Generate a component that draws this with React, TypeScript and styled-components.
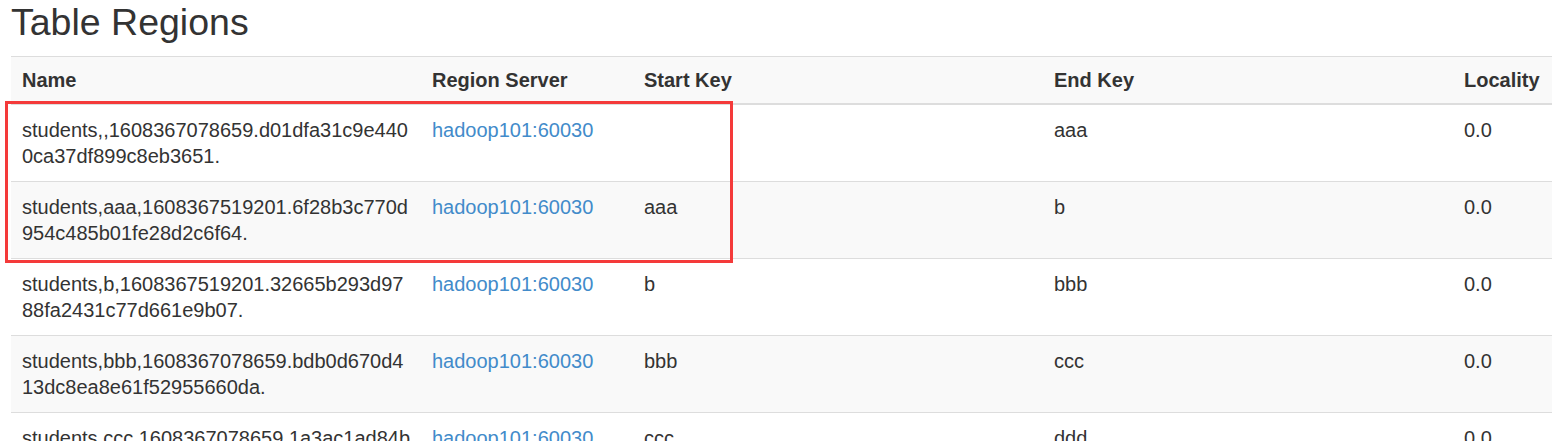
import React from "react";
import styled, { createGlobalStyle } from "styled-components";

const GlobalStyle = createGlobalStyle`
  html, body {
    margin: 0;
    padding: 0;
    background: #fff;
    overflow: hidden;
  }
  body {
    font-family: "Liberation Sans", Arial, Helvetica, sans-serif;
    color: #333;
  }
`;

const Page = styled.div`
  position: relative;
  padding: 2px 0 0 11px;
`;

const Title = styled.h2`
  margin: 0 0 14px;
  font-size: 37.5px;
  line-height: 40px;
  font-weight: 400;
  color: #333;
`;

const RegionTable = styled.table`
  width: 1541px;
  border-collapse: collapse;
  border-spacing: 0;
  table-layout: fixed;
  font-size: 20px;
  line-height: 26px;
`;

const HeadCell = styled.th`
  padding: 10px 11px;
  text-align: left;
  font-weight: 700;
  background: #f9f9f9;
  border-top: 1px solid #ddd;
  border-bottom: 2px solid #ddd;
  vertical-align: bottom;
  white-space: nowrap;
`;

const Row = styled.tr<{ $striped: boolean }>`
  background: ${(p) => (p.$striped ? "#f9f9f9" : "#fff")};
`;

const Cell = styled.td`
  padding: 12px 8px 12px 11px;
  border-top: 1px solid #ddd;
  vertical-align: top;
  word-break: break-all;
`;

const ServerLink = styled.a`
  color: #428bca;
  text-decoration: none;
`;

// red annotation frame drawn over the first two rows
const Highlight = styled.div`
  position: absolute;
  left: 5px;
  top: 101px;
  width: 728px;
  height: 162px;
  box-sizing: border-box;
  border: 3px solid #f43a3a;
  pointer-events: none;
`;

interface Region {
  name: string;
  server: string;
  startKey: string;
  endKey: string;
  locality: string;
}

const regions: Region[] = [
  {
    name: "students,,1608367078659.d01dfa31c9e4400ca37df899c8eb3651.",
    server: "hadoop101:60030",
    startKey: "",
    endKey: "aaa",
    locality: "0.0",
  },
  {
    name: "students,aaa,1608367519201.6f28b3c770d954c485b01fe28d2c6f64.",
    server: "hadoop101:60030",
    startKey: "aaa",
    endKey: "b",
    locality: "0.0",
  },
  {
    name: "students,b,1608367519201.32665b293d9788fa2431c77d661e9b07.",
    server: "hadoop101:60030",
    startKey: "b",
    endKey: "bbb",
    locality: "0.0",
  },
  {
    name: "students,bbb,1608367078659.bdb0d670d413dc8ea8e61f52955660da.",
    server: "hadoop101:60030",
    startKey: "bbb",
    endKey: "ccc",
    locality: "0.0",
  },
  {
    name: "students,ccc,1608367078659.1a3ac1ad84be7f0c2d9a51b36e48f02.",
    server: "hadoop101:60030",
    startKey: "ccc",
    endKey: "ddd",
    locality: "0.0",
  },
];

const App: React.FC = () => {
  return (
    <>
      <GlobalStyle />
      <Page>
        <Title>Table Regions</Title>
        <RegionTable>
          <colgroup>
            <col style={{ width: 410 }} />
            <col style={{ width: 212 }} />
            <col style={{ width: 410 }} />
            <col style={{ width: 410 }} />
            <col />
          </colgroup>
          <thead>
            <tr>
              <HeadCell>Name</HeadCell>
              <HeadCell>Region Server</HeadCell>
              <HeadCell>Start Key</HeadCell>
              <HeadCell>End Key</HeadCell>
              <HeadCell>Locality</HeadCell>
            </tr>
          </thead>
          <tbody>
            {regions.map((r, i) => (
              <Row key={r.name} $striped={i % 2 === 1}>
                <Cell>{r.name}</Cell>
                <Cell>
                  <ServerLink href="#">{r.server}</ServerLink>
                </Cell>
                <Cell>{r.startKey}</Cell>
                <Cell>{r.endKey}</Cell>
                <Cell>{r.locality}</Cell>
              </Row>
            ))}
          </tbody>
        </RegionTable>
        <Highlight />
      </Page>
    </>
  );
};

export default App;
